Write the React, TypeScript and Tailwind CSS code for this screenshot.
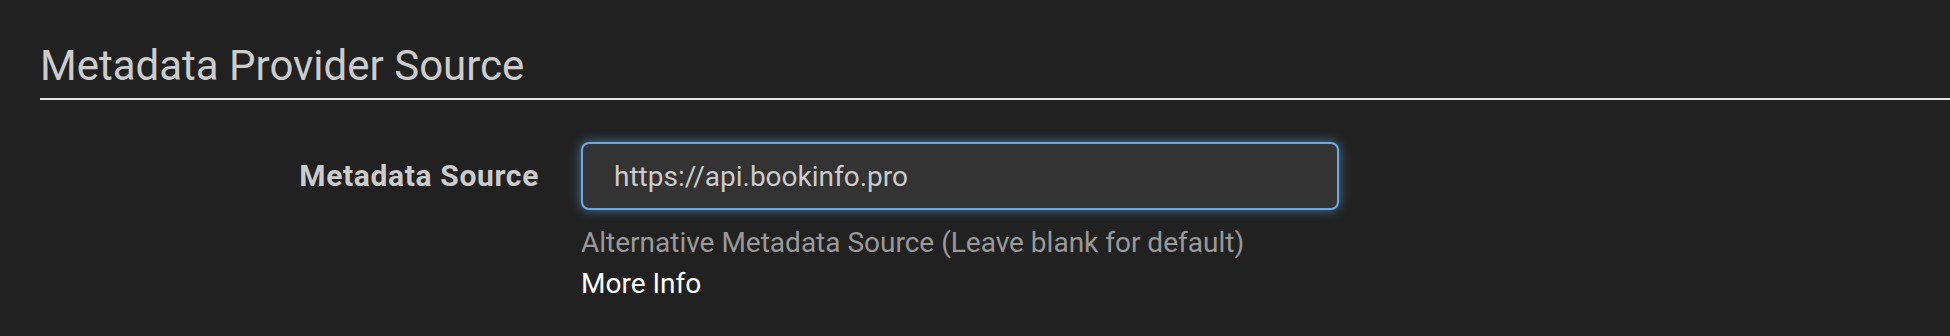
export default function App() {
  return (
    <div className="w-[1950px] h-[336px] bg-[#212121] overflow-hidden font-['Roboto',sans-serif]">
      <div className="pl-[40px] pt-[41px]">
        <div className="border-b-2 border-[#e6e6e6] pb-[8px] text-[42px] leading-[49px] text-[#cccccc]">
          Metadata Provider Source
        </div>
        <div className="mt-[42px] flex items-start">
          <div className="w-[499px] h-[68px] flex items-center justify-end pb-[2px]">
            <label className="text-[30px] font-bold tracking-[0.65px] text-[#cccccc]">Metadata Source</label>
          </div>
          <div className="ml-[42px] flex flex-col">
            <input
              readOnly
              value="https://api.bookinfo.pro"
              className="w-[758px] h-[68px] rounded-[8px] border-2 border-[#6ea9e6] bg-[#333333] px-[31px] text-[28px] text-[#cccccc] outline-none shadow-[0_0_12px_rgba(102,175,233,0.6)] font-['Roboto',sans-serif]"
            />
            <div className="mt-[12px] text-[28px] leading-[41px] text-[#999999]">
              Alternative Metadata Source (Leave blank for default)
            </div>
            <a className="text-[28px] leading-[41px] text-white">More Info</a>
          </div>
        </div>
      </div>
    </div>
  );
}
